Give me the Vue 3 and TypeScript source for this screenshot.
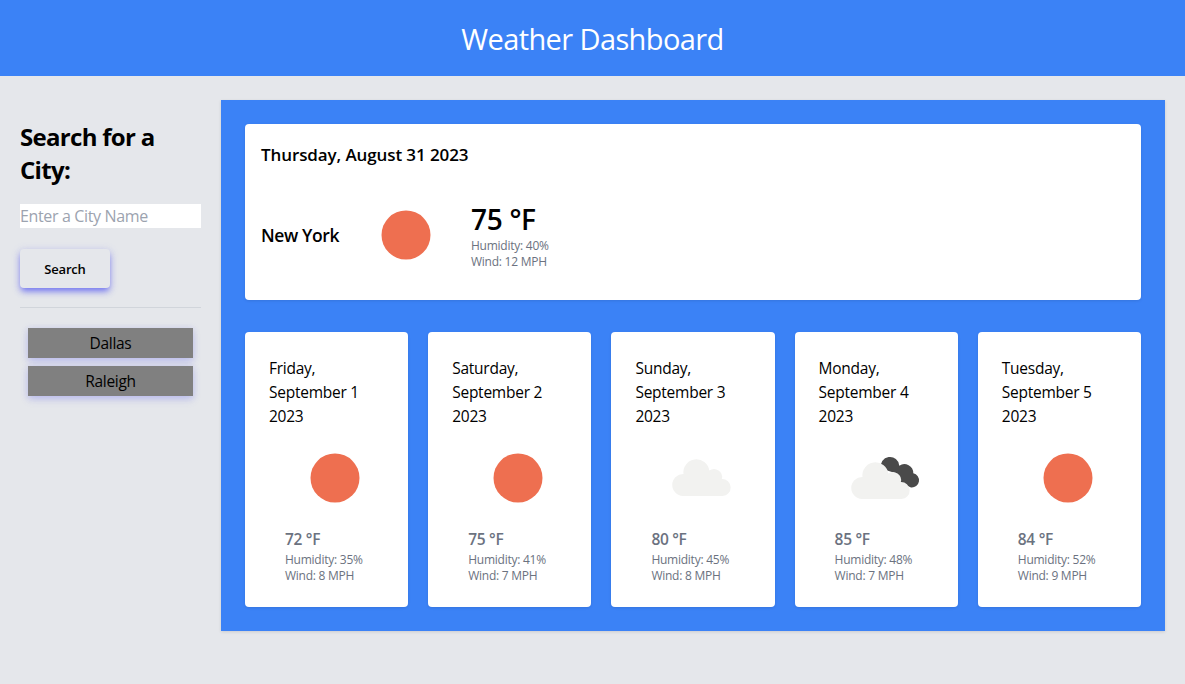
<script setup lang="ts">
interface DayForecast {
  weekday: string
  monthDay: string
  year: string
  icon: 'sun' | 'cloud' | 'clouds'
  temp: number
  humidity: number
  wind: number
}

const recentCities = ['Dallas', 'Raleigh']

const forecast: DayForecast[] = [
  { weekday: 'Friday,', monthDay: 'September 1', year: '2023', icon: 'sun', temp: 72, humidity: 35, wind: 8 },
  { weekday: 'Saturday,', monthDay: 'September 2', year: '2023', icon: 'sun', temp: 75, humidity: 41, wind: 7 },
  { weekday: 'Sunday,', monthDay: 'September 3', year: '2023', icon: 'cloud', temp: 80, humidity: 45, wind: 8 },
  { weekday: 'Monday,', monthDay: 'September 4', year: '2023', icon: 'clouds', temp: 85, humidity: 48, wind: 7 },
  { weekday: 'Tuesday,', monthDay: 'September 5', year: '2023', icon: 'sun', temp: 84, humidity: 52, wind: 9 }
]

const cloudPath =
  'M22 50 H61.5 A8.5 8.5 0 0 0 60.8 33 A8 8 0 0 0 48.3 24.6 A13 13 0 0 0 22.5 28 A11 11 0 0 0 22 50 Z'
const darkCloudPath =
  'M36 22.5 A9.3 9.3 0 1 1 54.3 19.7 A9 9 0 0 1 68.3 27.3 A7.2 7.2 0 0 1 66 41.5 L56 37 L50 27 Z'
</script>

<template>
  <div class="page">
    <header class="top-bar">
      <h1>Weather Dashboard</h1>
    </header>

    <main class="layout">
      <aside class="sidebar">
        <h2>Search for a City:</h2>
        <input class="city-input" type="text" placeholder="Enter a City Name" />
        <button class="search-btn" type="button">Search</button>
        <hr class="divider" />
        <div class="recent">
          <button v-for="city in recentCities" :key="city" class="recent-btn" type="button">
            {{ city }}
          </button>
        </div>
      </aside>

      <section class="panel">
        <div class="today">
          <h3 class="today-date">Thursday, August 31 2023</h3>
          <div class="today-row">
            <span class="today-city">New York</span>
            <svg class="icon" viewBox="0 0 80 64" aria-hidden="true">
              <circle cx="40" cy="32" r="24.5" fill="#ee6f50" />
            </svg>
            <div class="today-stats">
              <div class="today-temp">75 °F</div>
              <p>Humidity: 40%</p>
              <p>Wind: 12 MPH</p>
            </div>
          </div>
        </div>

        <div class="days">
          <article v-for="day in forecast" :key="day.monthDay" class="day-card">
            <div class="day-date">
              {{ day.weekday }}<br />{{ day.monthDay }}<br />{{ day.year }}
            </div>
            <svg class="icon day-icon" viewBox="0 0 80 64" aria-hidden="true">
              <circle v-if="day.icon === 'sun'" cx="40" cy="32" r="24.5" fill="#ee6f50" />
              <path v-if="day.icon === 'clouds'" :d="darkCloudPath" fill="#4a4a4a" />
              <path
                v-if="day.icon !== 'sun'"
                :d="cloudPath"
                :transform="day.icon === 'clouds' ? 'translate(-5 3)' : undefined"
                fill="#f2f2f0"
              />
            </svg>
            <div class="day-stats">
              <div class="day-temp">{{ day.temp }} °F</div>
              <p>Humidity: {{ day.humidity }}%</p>
              <p>Wind: {{ day.wind }} MPH</p>
            </div>
          </article>
        </div>
      </section>
    </main>
  </div>
</template>

<style>
body {
  background: #e5e7eb;
}
</style>

<style scoped>
.page {
  min-height: 684px;
  background: #e5e7eb;
  font-family: "Open Sans", "Noto Sans", sans-serif;
  color: #000;
}

.top-bar {
  height: 76px;
  background: #3b82f6;
  display: flex;
  align-items: center;
  justify-content: center;
}

.top-bar h1 {
  margin: 0;
  font-size: 29px;
  font-weight: 400;
  color: #fff;
  letter-spacing: -0.6px;
}

.layout {
  display: flex;
  padding: 24px 20px 0;
  gap: 20px;
}

.sidebar {
  width: 181px;
  flex-shrink: 0;
  padding-top: 20px;
}

.sidebar h2 {
  margin: 0 0 18px;
  font-size: 24px;
  line-height: 33px;
  font-weight: 700;
  letter-spacing: -0.7px;
}

.city-input {
  display: block;
  box-sizing: border-box;
  width: 181px;
  height: 24px;
  padding: 0;
  border: 0;
  outline: none;
  background: #fff;
  font: inherit;
  font-size: 16px;
  letter-spacing: -0.35px;
}

.city-input::placeholder {
  color: #9ca3af;
  opacity: 1;
}

.search-btn {
  display: block;
  width: 90px;
  height: 39px;
  margin-top: 21px;
  border: 0;
  border-radius: 4px;
  background: #e5e7eb;
  font: inherit;
  font-size: 13px;
  font-weight: 600;
  letter-spacing: -0.2px;
  box-shadow: 0 4px 6px -1px rgba(99, 102, 241, 0.85), 0 2px 8px 1px rgba(99, 102, 241, 0.18);
}

.divider {
  margin: 19px 0 20px;
  border: 0;
  border-top: 1px solid #d1d5db;
}

.recent {
  display: flex;
  flex-direction: column;
  gap: 8px;
  padding: 0 8px;
}

.recent-btn {
  height: 30px;
  border: 0;
  background: #808080;
  font: inherit;
  font-size: 15.5px;
  letter-spacing: -0.3px;
  padding: 0;
  box-shadow: 0 4px 8px -1px rgba(99, 102, 241, 0.25), 0 1px 6px 1px rgba(99, 102, 241, 0.15);
}

.panel {
  width: 944px;
  height: 531px;
  box-sizing: border-box;
  padding: 24px;
  background: #3b82f6;
  box-shadow: 0 1px 3px rgba(0, 0, 0, 0.12);
}

.today {
  height: 176px;
  box-sizing: border-box;
  padding: 20px 16px 0;
  background: #fff;
  border-radius: 4px;
  box-shadow: 0 1px 3px rgba(0, 0, 0, 0.1);
}

.today-date {
  margin: 0;
  font-size: 17px;
  line-height: 22px;
  font-weight: 600;
  letter-spacing: -0.1px;
}

.today-row {
  display: flex;
  align-items: center;
  margin-top: 34px;
}

.today-city {
  width: 105px;
  font-size: 17.5px;
  font-weight: 600;
  letter-spacing: -0.4px;
}

.icon {
  display: block;
  width: 80px;
  height: 64px;
}

.today-stats {
  margin-left: 25px;
}

.today-temp {
  font-size: 28px;
  line-height: 38px;
  font-weight: 600;
  letter-spacing: -0.3px;
}

.today-stats p,
.day-stats p {
  margin: 0;
  font-size: 12px;
  line-height: 16px;
  color: #6b7280;
  letter-spacing: -0.25px;
}

.days {
  display: grid;
  grid-template-columns: repeat(5, 1fr);
  gap: 20px;
  margin-top: 32px;
}

.day-card {
  height: 275px;
  box-sizing: border-box;
  padding: 24px;
  background: #fff;
  border-radius: 4px;
  box-shadow: 0 1px 3px rgba(0, 0, 0, 0.1);
}

.day-date {
  font-size: 15.5px;
  line-height: 24px;
  letter-spacing: -0.25px;
}

.day-icon {
  margin: 18px 0 0 26px;
}

.day-stats {
  margin: 17px 0 0 16px;
}

.day-temp {
  font-size: 15.5px;
  line-height: 25px;
  font-weight: 600;
  color: #6b7280;
  letter-spacing: -0.3px;
}
</style>
